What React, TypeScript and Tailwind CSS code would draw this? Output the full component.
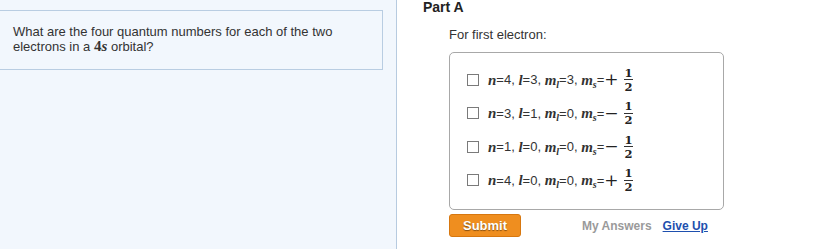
import React from "react";

function Frac({ n, d }: { n: string; d: string }) {
  return (
    <span className="inline-flex flex-col items-center align-middle ml-[5px] font-['DejaVu_Serif','Liberation_Serif',serif] font-bold text-[11.5px] leading-[10px] text-[#222]">
      <span className="px-[1px]">{n}</span>
      <span className="w-[9px] h-[1px] bg-[#333] my-[1.5px]" />
      <span className="px-[1px]">{d}</span>
    </span>
  );
}

function V({ c, sub }: { c: string; sub?: string }) {
  return (
    <span className="font-['Liberation_Serif',serif] italic font-bold text-[15px] text-[#333]">
      {c}
      {sub && <sub className="text-[10px] -bottom-[3px]">{sub}</sub>}
    </span>
  );
}

const rows = [
  { n: "4", l: "3", ml: "3", sign: "+" },
  { n: "3", l: "1", ml: "0", sign: "−" },
  { n: "1", l: "0", ml: "0", sign: "−" },
  { n: "4", l: "0", ml: "0", sign: "+" },
];

export default function App() {
  return (
    <div className="w-[818px] h-[249px] bg-white flex font-['Liberation_Sans',Arial,sans-serif] text-[#333] overflow-hidden">
      {/* Left — question */}
      <div className="w-[397px] h-full bg-[#f2f7fd] border-r border-[#b7cbe0] shrink-0 pt-[10px]">
        <div className="w-[383px] h-[60px] border border-l-0 border-[#b9cde2] pl-[13px] pt-[13px] text-[13px] leading-[15px]">
          What are the four quantum numbers for each of the two
          <br />
          electrons in a{" "}
          <span className="font-['Liberation_Serif',serif] text-[15px] font-bold">
            4<i>s</i>
          </span>{" "}
          orbital?
        </div>
      </div>

      {/* Right — Part A */}
      <div className="pl-[26px] flex-1">
        <div className="font-bold text-[14px] leading-[15px] text-[#222]">Part A</div>
        <div className="ml-[26px] mt-[12px] text-[13px] leading-[15px]">For first electron:</div>
        <div className="ml-[26px] mt-[10px] w-[275px] h-[158px] border border-[#a8a8a8] rounded-[5px] pl-[17px] pt-[10px]">
          {rows.map((r, i) => (
            <div key={i} className="flex items-center h-[33.5px] text-[13px]">
              <span className="w-[12px] h-[12px] border border-[#7a7a7a] bg-white shrink-0" />
              <span className="ml-[9px] flex items-center whitespace-nowrap">
                <V c="n" />={r.n},&nbsp;<V c="l" />={r.l},&nbsp;<V c="m" sub="l" />={r.ml},&nbsp;
                <V c="m" sub="s" />=
                <span className="font-['DejaVu_Serif',serif] text-[17px] leading-none text-[#222]">
                  {r.sign === "+" ? "+" : "−"}
                </span>
                <Frac n="1" d="2" />
              </span>
            </div>
          ))}
        </div>
        <div className="ml-[26px] mt-[4px] flex items-center">
          <button className="w-[72px] h-[23px] rounded-[3px] bg-[#ef8e1f] border border-[#d7770f] text-white font-bold text-[13px] [text-shadow:0_1px_1px_rgba(0,0,0,0.45)]">
            Submit
          </button>
          <span className="ml-[61px] text-[12px] font-bold text-[#9a9a9a]">My Answers</span>
          <a className="ml-[11px] text-[12px] font-bold text-[#1e4fae] underline">Give Up</a>
        </div>
      </div>
    </div>
  );
}
